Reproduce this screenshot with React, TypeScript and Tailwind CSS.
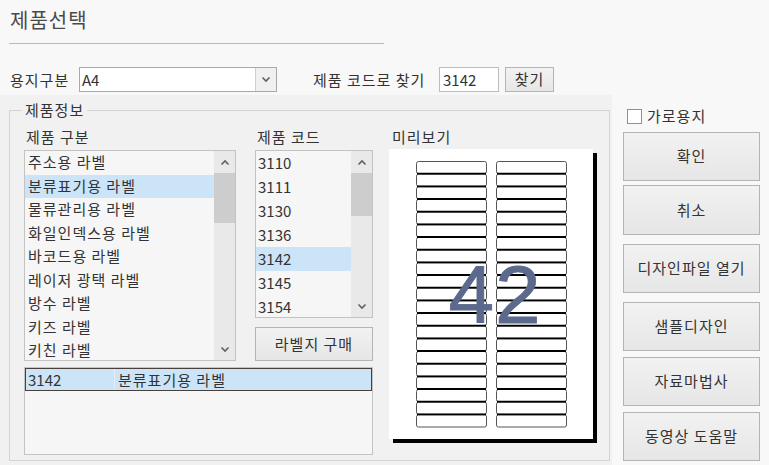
import React from "react";

const categories = [
  "주소용 라벨",
  "분류표기용 라벨",
  "물류관리용 라벨",
  "화일인덱스용 라벨",
  "바코드용 라벨",
  "레이저 광택 라벨",
  "방수 라벨",
  "키즈 라벨",
  "키친 라벨",
];
const codes = ["3110", "3111", "3130", "3136", "3142", "3145", "3154"];

function Chevron({ up }: { up?: boolean }) {
  return (
    <svg width="10" height="7" viewBox="0 0 10 7">
      <polyline
        points={up ? "1.5,5.5 5,2 8.5,5.5" : "1.5,1.5 5,5 8.5,1.5"}
        fill="none"
        stroke="#606060"
        strokeWidth="1.6"
      />
    </svg>
  );
}

function ScrollBar({ thumb }: { thumb: number }) {
  return (
    <div className="flex w-[21px] shrink-0 flex-col bg-[#e9e9e9]">
      <div className="flex h-[22px] items-center justify-center">
        <Chevron up />
      </div>
      <div className="bg-[#cdcdcd]" style={{ height: thumb }} />
      <div className="flex-1" />
      <div className="flex h-[22px] items-center justify-center">
        <Chevron />
      </div>
    </div>
  );
}

function Preview() {
  const rows = 21;
  const top = 12;
  const h = 266 / rows;
  const cols = [27, 107];
  const els: React.ReactNode[] = [];
  cols.forEach((x0, c) => {
    for (let i = 0; i < rows; i++) {
      els.push(
        <rect
          key={`r${c}-${i}`}
          x={x0 + 0.5}
          y={top + i * h + 0.5}
          width={70}
          height={h - 0.5}
          rx={2}
          fill="#fff"
          stroke="#555"
          strokeWidth={1}
        />
      );
    }
    for (let i = 1; i < rows; i++) {
      els.push(
        <line
          key={`l${c}-${i}`}
          x1={x0 + 1}
          x2={x0 + 70}
          y1={top + i * h}
          y2={top + i * h}
          stroke="#000"
          strokeWidth={1.8}
        />
      );
    }
  });
  return (
    <svg width="204" height="290" viewBox="0 0 204 290" className="block">
      {els}
      <text
        x="106"
        y="174"
        textAnchor="middle"
        fontFamily="'Liberation Sans', Arial, sans-serif"
        fontSize="82"
        fill="#5b6a8c"
        stroke="#5b6a8c"
        strokeWidth="0.8"
      >
        42
      </text>
    </svg>
  );
}

function Btn({ children, className = "" }: { children: React.ReactNode; className?: string }) {
  return (
    <div
      className={`flex items-center justify-center border border-[#b4b4b4] bg-gradient-to-b from-[#f2f2f2] to-[#e6e6e6] text-[15px] text-[#333] ${className}`}
    >
      {children}
    </div>
  );
}

export default function App() {
  return (
    <div
      className="relative h-[465px] w-[769px] overflow-hidden bg-[#f8f8f8] tracking-[1px] text-[#333]"
      style={{ fontFamily: "'Noto Sans CJK KR', 'Noto Sans', sans-serif" }}
    >
      {/* header */}
      <div className="pl-[10px] pt-[6px]">
        <div className="h-[28px] text-[20px] leading-[28px] text-[#4a4a4a]">제품선택</div>
        <div className="ml-[-1px] mt-[9px] h-px w-[375px] bg-[#b9b9b9]" />
      </div>

      {/* top row */}
      <div className="mt-[23px] flex h-[25px] items-center text-[15px]">
        <span className="ml-[10px] w-[69px] leading-[25px]">용지구분</span>
        <div className="flex h-[25px] w-[198px] border border-[#a9a9a9] bg-white">
          <span className="flex-1 pl-[2px] leading-[23px] tracking-normal">A4</span>
          <div className="flex w-[21px] items-center justify-center border-l border-[#cfcfcf] bg-[#f0f0f0]">
            <Chevron />
          </div>
        </div>
        <span className="ml-[36px] w-[126px] leading-[25px]">제품 코드로 찾기</span>
        <div className="h-[25px] w-[60px] border border-[#bdbdbd] bg-white pl-[3px] leading-[23px] tracking-normal">
          3142
        </div>
        <Btn className="ml-[6px] h-[25px] w-[49px] border-[#adadad]">찾기</Btn>
      </div>

      {/* main */}
      <div className="mt-[3px] flex h-[370px]">
        <div className="w-[612px] bg-[#f1f1f1] pl-[9px] pt-[15px]">
          <div className="relative h-[351px] w-[601px] border border-[#d4d4d4]">
            <span className="absolute left-[12px] top-[-11px] bg-[#f1f1f1] px-[3px] text-[15px] leading-[20px]">
              제품정보
            </span>
            <div className="flex pl-[14px] pt-[17px] text-[15px]">
              {/* left block */}
              <div className="flex w-[349px] flex-col">
                <div className="flex">
                  <div className="w-[212px]">
                    <div className="h-[18px] pl-[2px] leading-[18px]">제품 구분</div>
                    <div className="mt-[4px] flex h-[211px] border border-[#c3c3c3] bg-[#f6f6f6]">
                      <div className="flex-1 overflow-hidden">
                        {categories.map((c, i) => (
                          <div
                            key={c}
                            className={`h-[23.5px] pl-[3px] leading-[22px] ${i === 1 ? "bg-[#cce4f7]" : ""}`}
                          >
                            {c}
                          </div>
                        ))}
                      </div>
                      <ScrollBar thumb={50} />
                    </div>
                  </div>
                  <div className="ml-[19px] w-[118px]">
                    <div className="h-[18px] pl-[2px] leading-[18px]">제품 코드</div>
                    <div className="mt-[4px] flex h-[168px] border border-[#c3c3c3] bg-[#f6f6f6] tracking-normal">
                      <div className="flex-1 overflow-hidden">
                        {codes.map((c, i) => (
                          <div
                            key={c}
                            className={`h-[24px] pl-[2px] leading-[23px] ${i === 4 ? "bg-[#cce4f7]" : ""}`}
                          >
                            {c}
                          </div>
                        ))}
                      </div>
                      <ScrollBar thumb={43} />
                    </div>
                    <Btn className="mt-[9px] h-[34px] w-[118px]">라벨지 구매</Btn>
                  </div>
                </div>
                <div className="mt-[6px] h-[88px] w-[349px] border border-[#c3c3c3] bg-[#f6f6f6]">
                  <div className="flex h-[23px] w-[347px] border border-[#4a403b] bg-[#cce4f7] leading-[21px]">
                    <span className="w-[89px] border-r border-[#e8eef3] pl-[2px] tracking-normal">3142</span>
                    <span className="pl-[3px]">분류표기용 라벨</span>
                  </div>
                </div>
              </div>
              {/* preview */}
              <div className="ml-[16px] w-[210px]">
                <div className="h-[18px] pl-[3px] leading-[18px]">미리보기</div>
                <div className="mt-[3px] h-[290px] w-[204px] bg-white shadow-[4px_4px_0_#000]">
                  <Preview />
                </div>
              </div>
            </div>
          </div>
        </div>

        {/* right column */}
        <div className="flex w-[157px] flex-col pl-[11px] text-[15px]">
          <div className="mt-[13px] flex h-[16px] items-center">
            <div className="ml-[4px] h-[15px] w-[15px] border border-[#8f8f8f] bg-white" />
            <span className="ml-[5px] leading-[16px]">가로용지</span>
          </div>
          <Btn className="mt-[8px] h-[49px] w-[137px]">확인</Btn>
          <Btn className="mt-[4px] h-[50px] w-[137px]">취소</Btn>
          <Btn className="mt-[9px] h-[49px] w-[137px]">디자인파일 열기</Btn>
          <Btn className="mt-[9px] h-[49px] w-[137px]">샘플디자인</Btn>
          <Btn className="mt-[6px] h-[49px] w-[137px]">자료마법사</Btn>
          <Btn className="mt-[6px] h-[49px] w-[137px]">동영상 도움말</Btn>
        </div>
      </div>
    </div>
  );
}
